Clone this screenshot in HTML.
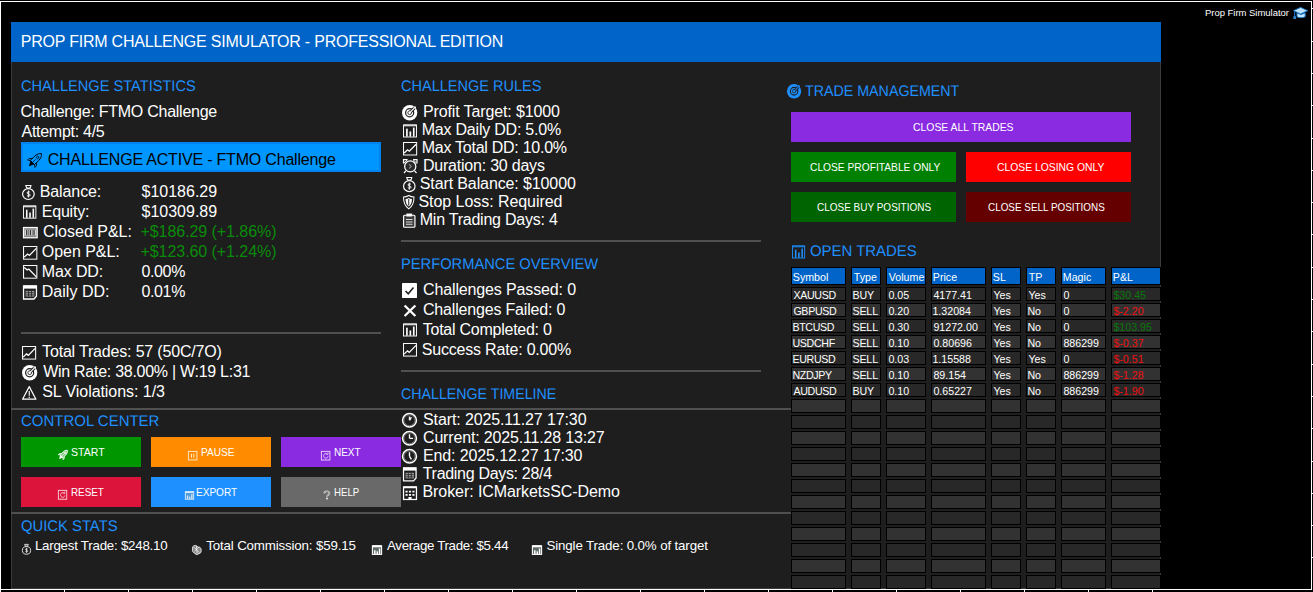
<!DOCTYPE html>
<html lang="en"><head><meta charset="utf-8"><title>Prop Firm Challenge Simulator</title>
<style>
html,body{margin:0;padding:0;background:#000}
body{width:1313px;height:592px;position:relative;overflow:hidden;font-family:'Liberation Sans', sans-serif}
#c{position:absolute;left:0;top:0;width:1313px;height:592px;overflow:hidden;background:#000}
#c div,#c span,#c svg{position:absolute;display:block}
#c span{white-space:pre}
#c svg{overflow:visible}
</style></head>
<body>
<div id="c">
<div style="left:0px;top:1px;width:1312px;height:1px;background:#fff;"></div>
<div style="left:0px;top:1px;width:1px;height:591px;background:#fff;"></div>
<div style="left:0px;top:589px;width:1312px;height:1px;background:#fff;"></div>
<div style="left:1311px;top:1px;width:1px;height:589px;background:#fff;"></div>
<div style="left:1311px;top:8px;width:2px;height:1px;background:#fff;"></div>
<div style="left:1311px;top:41px;width:2px;height:1px;background:#fff;"></div>
<div style="left:1311px;top:73px;width:2px;height:1px;background:#fff;"></div>
<div style="left:1311px;top:105px;width:2px;height:1px;background:#fff;"></div>
<div style="left:1311px;top:138px;width:2px;height:1px;background:#fff;"></div>
<div style="left:1311px;top:170px;width:2px;height:1px;background:#fff;"></div>
<div style="left:1311px;top:202px;width:2px;height:1px;background:#fff;"></div>
<div style="left:1311px;top:234px;width:2px;height:1px;background:#fff;"></div>
<div style="left:1311px;top:267px;width:2px;height:1px;background:#fff;"></div>
<div style="left:1311px;top:299px;width:2px;height:1px;background:#fff;"></div>
<div style="left:1311px;top:331px;width:2px;height:1px;background:#fff;"></div>
<div style="left:1311px;top:364px;width:2px;height:1px;background:#fff;"></div>
<div style="left:1311px;top:396px;width:2px;height:1px;background:#fff;"></div>
<div style="left:1311px;top:428px;width:2px;height:1px;background:#fff;"></div>
<div style="left:1311px;top:461px;width:2px;height:1px;background:#fff;"></div>
<div style="left:1311px;top:493px;width:2px;height:1px;background:#fff;"></div>
<div style="left:1311px;top:525px;width:2px;height:1px;background:#fff;"></div>
<div style="left:1311px;top:557px;width:2px;height:1px;background:#fff;"></div>
<div style="left:64px;top:589px;width:1px;height:3px;background:#fff;"></div>
<div style="left:128px;top:589px;width:1px;height:3px;background:#fff;"></div>
<div style="left:192px;top:589px;width:1px;height:3px;background:#fff;"></div>
<div style="left:256px;top:589px;width:1px;height:3px;background:#fff;"></div>
<div style="left:320px;top:589px;width:1px;height:3px;background:#fff;"></div>
<div style="left:384px;top:589px;width:1px;height:3px;background:#fff;"></div>
<div style="left:448px;top:589px;width:1px;height:3px;background:#fff;"></div>
<div style="left:512px;top:589px;width:1px;height:3px;background:#fff;"></div>
<div style="left:576px;top:589px;width:1px;height:3px;background:#fff;"></div>
<div style="left:640px;top:589px;width:1px;height:3px;background:#fff;"></div>
<div style="left:704px;top:589px;width:1px;height:3px;background:#fff;"></div>
<div style="left:768px;top:589px;width:1px;height:3px;background:#fff;"></div>
<div style="left:832px;top:589px;width:1px;height:3px;background:#fff;"></div>
<div style="left:896px;top:589px;width:1px;height:3px;background:#fff;"></div>
<div style="left:960px;top:589px;width:1px;height:3px;background:#fff;"></div>
<div style="left:1024px;top:589px;width:1px;height:3px;background:#fff;"></div>
<div style="left:1088px;top:589px;width:1px;height:3px;background:#fff;"></div>
<div style="left:1152px;top:589px;width:1px;height:3px;background:#fff;"></div>
<div style="left:11px;top:22px;width:1150px;height:567px;background:#1e1e1e;box-shadow:inset 0 0 0 1px #3c3c3c;"></div>
<div style="left:11px;top:22px;width:1150px;height:40px;background:#0064c8;"></div>
<div style="left:21px;top:332px;width:360px;height:2px;background:#505050;"></div>
<div style="left:401px;top:240px;width:360px;height:2px;background:#505050;"></div>
<div style="left:401px;top:370px;width:360px;height:2px;background:#505050;"></div>
<div style="left:11px;top:408px;width:780px;height:2px;background:#505050;"></div>
<div style="left:11px;top:512px;width:780px;height:2px;background:#505050;"></div>
<div style="left:21px;top:142px;width:360px;height:30px;background:#0096ff;box-shadow:inset 0 0 0 2px #0082f0;"></div>
<div style="left:21px;top:437px;width:120px;height:30px;background:#009600;"></div>
<div style="left:151px;top:437px;width:120px;height:30px;background:#ff8c00;"></div>
<div style="left:281px;top:437px;width:120px;height:30px;background:#8a2be2;"></div>
<div style="left:21px;top:477px;width:120px;height:30px;background:#dc143c;"></div>
<div style="left:151px;top:477px;width:120px;height:30px;background:#1e90ff;"></div>
<div style="left:281px;top:477px;width:120px;height:30px;background:#696969;"></div>
<div style="left:791px;top:112px;width:340px;height:30px;background:#8a2be2;"></div>
<div style="left:791px;top:152px;width:165px;height:30px;background:#008000;"></div>
<div style="left:966px;top:152px;width:165px;height:30px;background:#ff0000;"></div>
<div style="left:791px;top:192px;width:165px;height:30px;background:#006400;"></div>
<div style="left:966px;top:192px;width:165px;height:30px;background:#640000;"></div>
<div style="left:791px;top:267px;width:55px;height:18px;background:#0064c8;box-shadow:inset 0 0 0 1px #000;"></div>
<div style="left:851px;top:267px;width:30px;height:18px;background:#0064c8;box-shadow:inset 0 0 0 1px #000;"></div>
<div style="left:886px;top:267px;width:40px;height:18px;background:#0064c8;box-shadow:inset 0 0 0 1px #000;"></div>
<div style="left:931px;top:267px;width:55px;height:18px;background:#0064c8;box-shadow:inset 0 0 0 1px #000;"></div>
<div style="left:991px;top:267px;width:30px;height:18px;background:#0064c8;box-shadow:inset 0 0 0 1px #000;"></div>
<div style="left:1026px;top:267px;width:30px;height:18px;background:#0064c8;box-shadow:inset 0 0 0 1px #000;"></div>
<div style="left:1061px;top:267px;width:45px;height:18px;background:#0064c8;box-shadow:inset 0 0 0 1px #000;"></div>
<div style="left:1111px;top:267px;width:50px;height:18px;background:#0064c8;box-shadow:inset 0 0 0 1px #000;"></div>
<div style="left:791px;top:287px;width:55px;height:14px;background:#282828;box-shadow:inset 0 0 0 1px #000;"></div>
<div style="left:851px;top:287px;width:30px;height:14px;background:#282828;box-shadow:inset 0 0 0 1px #000;"></div>
<div style="left:886px;top:287px;width:40px;height:14px;background:#282828;box-shadow:inset 0 0 0 1px #000;"></div>
<div style="left:931px;top:287px;width:55px;height:14px;background:#282828;box-shadow:inset 0 0 0 1px #000;"></div>
<div style="left:991px;top:287px;width:30px;height:14px;background:#282828;box-shadow:inset 0 0 0 1px #000;"></div>
<div style="left:1026px;top:287px;width:30px;height:14px;background:#282828;box-shadow:inset 0 0 0 1px #000;"></div>
<div style="left:1061px;top:287px;width:45px;height:14px;background:#282828;box-shadow:inset 0 0 0 1px #000;"></div>
<div style="left:1111px;top:287px;width:50px;height:14px;background:#282828;box-shadow:inset 0 0 0 1px #000;"></div>
<div style="left:791px;top:303px;width:55px;height:14px;background:#323232;box-shadow:inset 0 0 0 1px #000;"></div>
<div style="left:851px;top:303px;width:30px;height:14px;background:#323232;box-shadow:inset 0 0 0 1px #000;"></div>
<div style="left:886px;top:303px;width:40px;height:14px;background:#323232;box-shadow:inset 0 0 0 1px #000;"></div>
<div style="left:931px;top:303px;width:55px;height:14px;background:#323232;box-shadow:inset 0 0 0 1px #000;"></div>
<div style="left:991px;top:303px;width:30px;height:14px;background:#323232;box-shadow:inset 0 0 0 1px #000;"></div>
<div style="left:1026px;top:303px;width:30px;height:14px;background:#323232;box-shadow:inset 0 0 0 1px #000;"></div>
<div style="left:1061px;top:303px;width:45px;height:14px;background:#323232;box-shadow:inset 0 0 0 1px #000;"></div>
<div style="left:1111px;top:303px;width:50px;height:14px;background:#323232;box-shadow:inset 0 0 0 1px #000;"></div>
<div style="left:791px;top:319px;width:55px;height:14px;background:#282828;box-shadow:inset 0 0 0 1px #000;"></div>
<div style="left:851px;top:319px;width:30px;height:14px;background:#282828;box-shadow:inset 0 0 0 1px #000;"></div>
<div style="left:886px;top:319px;width:40px;height:14px;background:#282828;box-shadow:inset 0 0 0 1px #000;"></div>
<div style="left:931px;top:319px;width:55px;height:14px;background:#282828;box-shadow:inset 0 0 0 1px #000;"></div>
<div style="left:991px;top:319px;width:30px;height:14px;background:#282828;box-shadow:inset 0 0 0 1px #000;"></div>
<div style="left:1026px;top:319px;width:30px;height:14px;background:#282828;box-shadow:inset 0 0 0 1px #000;"></div>
<div style="left:1061px;top:319px;width:45px;height:14px;background:#282828;box-shadow:inset 0 0 0 1px #000;"></div>
<div style="left:1111px;top:319px;width:50px;height:14px;background:#282828;box-shadow:inset 0 0 0 1px #000;"></div>
<div style="left:791px;top:335px;width:55px;height:14px;background:#323232;box-shadow:inset 0 0 0 1px #000;"></div>
<div style="left:851px;top:335px;width:30px;height:14px;background:#323232;box-shadow:inset 0 0 0 1px #000;"></div>
<div style="left:886px;top:335px;width:40px;height:14px;background:#323232;box-shadow:inset 0 0 0 1px #000;"></div>
<div style="left:931px;top:335px;width:55px;height:14px;background:#323232;box-shadow:inset 0 0 0 1px #000;"></div>
<div style="left:991px;top:335px;width:30px;height:14px;background:#323232;box-shadow:inset 0 0 0 1px #000;"></div>
<div style="left:1026px;top:335px;width:30px;height:14px;background:#323232;box-shadow:inset 0 0 0 1px #000;"></div>
<div style="left:1061px;top:335px;width:45px;height:14px;background:#323232;box-shadow:inset 0 0 0 1px #000;"></div>
<div style="left:1111px;top:335px;width:50px;height:14px;background:#323232;box-shadow:inset 0 0 0 1px #000;"></div>
<div style="left:791px;top:351px;width:55px;height:14px;background:#282828;box-shadow:inset 0 0 0 1px #000;"></div>
<div style="left:851px;top:351px;width:30px;height:14px;background:#282828;box-shadow:inset 0 0 0 1px #000;"></div>
<div style="left:886px;top:351px;width:40px;height:14px;background:#282828;box-shadow:inset 0 0 0 1px #000;"></div>
<div style="left:931px;top:351px;width:55px;height:14px;background:#282828;box-shadow:inset 0 0 0 1px #000;"></div>
<div style="left:991px;top:351px;width:30px;height:14px;background:#282828;box-shadow:inset 0 0 0 1px #000;"></div>
<div style="left:1026px;top:351px;width:30px;height:14px;background:#282828;box-shadow:inset 0 0 0 1px #000;"></div>
<div style="left:1061px;top:351px;width:45px;height:14px;background:#282828;box-shadow:inset 0 0 0 1px #000;"></div>
<div style="left:1111px;top:351px;width:50px;height:14px;background:#282828;box-shadow:inset 0 0 0 1px #000;"></div>
<div style="left:791px;top:367px;width:55px;height:14px;background:#323232;box-shadow:inset 0 0 0 1px #000;"></div>
<div style="left:851px;top:367px;width:30px;height:14px;background:#323232;box-shadow:inset 0 0 0 1px #000;"></div>
<div style="left:886px;top:367px;width:40px;height:14px;background:#323232;box-shadow:inset 0 0 0 1px #000;"></div>
<div style="left:931px;top:367px;width:55px;height:14px;background:#323232;box-shadow:inset 0 0 0 1px #000;"></div>
<div style="left:991px;top:367px;width:30px;height:14px;background:#323232;box-shadow:inset 0 0 0 1px #000;"></div>
<div style="left:1026px;top:367px;width:30px;height:14px;background:#323232;box-shadow:inset 0 0 0 1px #000;"></div>
<div style="left:1061px;top:367px;width:45px;height:14px;background:#323232;box-shadow:inset 0 0 0 1px #000;"></div>
<div style="left:1111px;top:367px;width:50px;height:14px;background:#323232;box-shadow:inset 0 0 0 1px #000;"></div>
<div style="left:791px;top:383px;width:55px;height:14px;background:#282828;box-shadow:inset 0 0 0 1px #000;"></div>
<div style="left:851px;top:383px;width:30px;height:14px;background:#282828;box-shadow:inset 0 0 0 1px #000;"></div>
<div style="left:886px;top:383px;width:40px;height:14px;background:#282828;box-shadow:inset 0 0 0 1px #000;"></div>
<div style="left:931px;top:383px;width:55px;height:14px;background:#282828;box-shadow:inset 0 0 0 1px #000;"></div>
<div style="left:991px;top:383px;width:30px;height:14px;background:#282828;box-shadow:inset 0 0 0 1px #000;"></div>
<div style="left:1026px;top:383px;width:30px;height:14px;background:#282828;box-shadow:inset 0 0 0 1px #000;"></div>
<div style="left:1061px;top:383px;width:45px;height:14px;background:#282828;box-shadow:inset 0 0 0 1px #000;"></div>
<div style="left:1111px;top:383px;width:50px;height:14px;background:#282828;box-shadow:inset 0 0 0 1px #000;"></div>
<div style="left:791px;top:399px;width:55px;height:14px;background:#323232;box-shadow:inset 0 0 0 1px #000;"></div>
<div style="left:851px;top:399px;width:30px;height:14px;background:#323232;box-shadow:inset 0 0 0 1px #000;"></div>
<div style="left:886px;top:399px;width:40px;height:14px;background:#323232;box-shadow:inset 0 0 0 1px #000;"></div>
<div style="left:931px;top:399px;width:55px;height:14px;background:#323232;box-shadow:inset 0 0 0 1px #000;"></div>
<div style="left:991px;top:399px;width:30px;height:14px;background:#323232;box-shadow:inset 0 0 0 1px #000;"></div>
<div style="left:1026px;top:399px;width:30px;height:14px;background:#323232;box-shadow:inset 0 0 0 1px #000;"></div>
<div style="left:1061px;top:399px;width:45px;height:14px;background:#323232;box-shadow:inset 0 0 0 1px #000;"></div>
<div style="left:1111px;top:399px;width:50px;height:14px;background:#323232;box-shadow:inset 0 0 0 1px #000;"></div>
<div style="left:791px;top:415px;width:55px;height:14px;background:#282828;box-shadow:inset 0 0 0 1px #000;"></div>
<div style="left:851px;top:415px;width:30px;height:14px;background:#282828;box-shadow:inset 0 0 0 1px #000;"></div>
<div style="left:886px;top:415px;width:40px;height:14px;background:#282828;box-shadow:inset 0 0 0 1px #000;"></div>
<div style="left:931px;top:415px;width:55px;height:14px;background:#282828;box-shadow:inset 0 0 0 1px #000;"></div>
<div style="left:991px;top:415px;width:30px;height:14px;background:#282828;box-shadow:inset 0 0 0 1px #000;"></div>
<div style="left:1026px;top:415px;width:30px;height:14px;background:#282828;box-shadow:inset 0 0 0 1px #000;"></div>
<div style="left:1061px;top:415px;width:45px;height:14px;background:#282828;box-shadow:inset 0 0 0 1px #000;"></div>
<div style="left:1111px;top:415px;width:50px;height:14px;background:#282828;box-shadow:inset 0 0 0 1px #000;"></div>
<div style="left:791px;top:431px;width:55px;height:14px;background:#323232;box-shadow:inset 0 0 0 1px #000;"></div>
<div style="left:851px;top:431px;width:30px;height:14px;background:#323232;box-shadow:inset 0 0 0 1px #000;"></div>
<div style="left:886px;top:431px;width:40px;height:14px;background:#323232;box-shadow:inset 0 0 0 1px #000;"></div>
<div style="left:931px;top:431px;width:55px;height:14px;background:#323232;box-shadow:inset 0 0 0 1px #000;"></div>
<div style="left:991px;top:431px;width:30px;height:14px;background:#323232;box-shadow:inset 0 0 0 1px #000;"></div>
<div style="left:1026px;top:431px;width:30px;height:14px;background:#323232;box-shadow:inset 0 0 0 1px #000;"></div>
<div style="left:1061px;top:431px;width:45px;height:14px;background:#323232;box-shadow:inset 0 0 0 1px #000;"></div>
<div style="left:1111px;top:431px;width:50px;height:14px;background:#323232;box-shadow:inset 0 0 0 1px #000;"></div>
<div style="left:791px;top:447px;width:55px;height:14px;background:#282828;box-shadow:inset 0 0 0 1px #000;"></div>
<div style="left:851px;top:447px;width:30px;height:14px;background:#282828;box-shadow:inset 0 0 0 1px #000;"></div>
<div style="left:886px;top:447px;width:40px;height:14px;background:#282828;box-shadow:inset 0 0 0 1px #000;"></div>
<div style="left:931px;top:447px;width:55px;height:14px;background:#282828;box-shadow:inset 0 0 0 1px #000;"></div>
<div style="left:991px;top:447px;width:30px;height:14px;background:#282828;box-shadow:inset 0 0 0 1px #000;"></div>
<div style="left:1026px;top:447px;width:30px;height:14px;background:#282828;box-shadow:inset 0 0 0 1px #000;"></div>
<div style="left:1061px;top:447px;width:45px;height:14px;background:#282828;box-shadow:inset 0 0 0 1px #000;"></div>
<div style="left:1111px;top:447px;width:50px;height:14px;background:#282828;box-shadow:inset 0 0 0 1px #000;"></div>
<div style="left:791px;top:463px;width:55px;height:14px;background:#323232;box-shadow:inset 0 0 0 1px #000;"></div>
<div style="left:851px;top:463px;width:30px;height:14px;background:#323232;box-shadow:inset 0 0 0 1px #000;"></div>
<div style="left:886px;top:463px;width:40px;height:14px;background:#323232;box-shadow:inset 0 0 0 1px #000;"></div>
<div style="left:931px;top:463px;width:55px;height:14px;background:#323232;box-shadow:inset 0 0 0 1px #000;"></div>
<div style="left:991px;top:463px;width:30px;height:14px;background:#323232;box-shadow:inset 0 0 0 1px #000;"></div>
<div style="left:1026px;top:463px;width:30px;height:14px;background:#323232;box-shadow:inset 0 0 0 1px #000;"></div>
<div style="left:1061px;top:463px;width:45px;height:14px;background:#323232;box-shadow:inset 0 0 0 1px #000;"></div>
<div style="left:1111px;top:463px;width:50px;height:14px;background:#323232;box-shadow:inset 0 0 0 1px #000;"></div>
<div style="left:791px;top:479px;width:55px;height:14px;background:#282828;box-shadow:inset 0 0 0 1px #000;"></div>
<div style="left:851px;top:479px;width:30px;height:14px;background:#282828;box-shadow:inset 0 0 0 1px #000;"></div>
<div style="left:886px;top:479px;width:40px;height:14px;background:#282828;box-shadow:inset 0 0 0 1px #000;"></div>
<div style="left:931px;top:479px;width:55px;height:14px;background:#282828;box-shadow:inset 0 0 0 1px #000;"></div>
<div style="left:991px;top:479px;width:30px;height:14px;background:#282828;box-shadow:inset 0 0 0 1px #000;"></div>
<div style="left:1026px;top:479px;width:30px;height:14px;background:#282828;box-shadow:inset 0 0 0 1px #000;"></div>
<div style="left:1061px;top:479px;width:45px;height:14px;background:#282828;box-shadow:inset 0 0 0 1px #000;"></div>
<div style="left:1111px;top:479px;width:50px;height:14px;background:#282828;box-shadow:inset 0 0 0 1px #000;"></div>
<div style="left:791px;top:495px;width:55px;height:14px;background:#323232;box-shadow:inset 0 0 0 1px #000;"></div>
<div style="left:851px;top:495px;width:30px;height:14px;background:#323232;box-shadow:inset 0 0 0 1px #000;"></div>
<div style="left:886px;top:495px;width:40px;height:14px;background:#323232;box-shadow:inset 0 0 0 1px #000;"></div>
<div style="left:931px;top:495px;width:55px;height:14px;background:#323232;box-shadow:inset 0 0 0 1px #000;"></div>
<div style="left:991px;top:495px;width:30px;height:14px;background:#323232;box-shadow:inset 0 0 0 1px #000;"></div>
<div style="left:1026px;top:495px;width:30px;height:14px;background:#323232;box-shadow:inset 0 0 0 1px #000;"></div>
<div style="left:1061px;top:495px;width:45px;height:14px;background:#323232;box-shadow:inset 0 0 0 1px #000;"></div>
<div style="left:1111px;top:495px;width:50px;height:14px;background:#323232;box-shadow:inset 0 0 0 1px #000;"></div>
<div style="left:791px;top:511px;width:55px;height:14px;background:#282828;box-shadow:inset 0 0 0 1px #000;"></div>
<div style="left:851px;top:511px;width:30px;height:14px;background:#282828;box-shadow:inset 0 0 0 1px #000;"></div>
<div style="left:886px;top:511px;width:40px;height:14px;background:#282828;box-shadow:inset 0 0 0 1px #000;"></div>
<div style="left:931px;top:511px;width:55px;height:14px;background:#282828;box-shadow:inset 0 0 0 1px #000;"></div>
<div style="left:991px;top:511px;width:30px;height:14px;background:#282828;box-shadow:inset 0 0 0 1px #000;"></div>
<div style="left:1026px;top:511px;width:30px;height:14px;background:#282828;box-shadow:inset 0 0 0 1px #000;"></div>
<div style="left:1061px;top:511px;width:45px;height:14px;background:#282828;box-shadow:inset 0 0 0 1px #000;"></div>
<div style="left:1111px;top:511px;width:50px;height:14px;background:#282828;box-shadow:inset 0 0 0 1px #000;"></div>
<div style="left:791px;top:527px;width:55px;height:14px;background:#323232;box-shadow:inset 0 0 0 1px #000;"></div>
<div style="left:851px;top:527px;width:30px;height:14px;background:#323232;box-shadow:inset 0 0 0 1px #000;"></div>
<div style="left:886px;top:527px;width:40px;height:14px;background:#323232;box-shadow:inset 0 0 0 1px #000;"></div>
<div style="left:931px;top:527px;width:55px;height:14px;background:#323232;box-shadow:inset 0 0 0 1px #000;"></div>
<div style="left:991px;top:527px;width:30px;height:14px;background:#323232;box-shadow:inset 0 0 0 1px #000;"></div>
<div style="left:1026px;top:527px;width:30px;height:14px;background:#323232;box-shadow:inset 0 0 0 1px #000;"></div>
<div style="left:1061px;top:527px;width:45px;height:14px;background:#323232;box-shadow:inset 0 0 0 1px #000;"></div>
<div style="left:1111px;top:527px;width:50px;height:14px;background:#323232;box-shadow:inset 0 0 0 1px #000;"></div>
<div style="left:791px;top:543px;width:55px;height:14px;background:#282828;box-shadow:inset 0 0 0 1px #000;"></div>
<div style="left:851px;top:543px;width:30px;height:14px;background:#282828;box-shadow:inset 0 0 0 1px #000;"></div>
<div style="left:886px;top:543px;width:40px;height:14px;background:#282828;box-shadow:inset 0 0 0 1px #000;"></div>
<div style="left:931px;top:543px;width:55px;height:14px;background:#282828;box-shadow:inset 0 0 0 1px #000;"></div>
<div style="left:991px;top:543px;width:30px;height:14px;background:#282828;box-shadow:inset 0 0 0 1px #000;"></div>
<div style="left:1026px;top:543px;width:30px;height:14px;background:#282828;box-shadow:inset 0 0 0 1px #000;"></div>
<div style="left:1061px;top:543px;width:45px;height:14px;background:#282828;box-shadow:inset 0 0 0 1px #000;"></div>
<div style="left:1111px;top:543px;width:50px;height:14px;background:#282828;box-shadow:inset 0 0 0 1px #000;"></div>
<div style="left:791px;top:559px;width:55px;height:14px;background:#323232;box-shadow:inset 0 0 0 1px #000;"></div>
<div style="left:851px;top:559px;width:30px;height:14px;background:#323232;box-shadow:inset 0 0 0 1px #000;"></div>
<div style="left:886px;top:559px;width:40px;height:14px;background:#323232;box-shadow:inset 0 0 0 1px #000;"></div>
<div style="left:931px;top:559px;width:55px;height:14px;background:#323232;box-shadow:inset 0 0 0 1px #000;"></div>
<div style="left:991px;top:559px;width:30px;height:14px;background:#323232;box-shadow:inset 0 0 0 1px #000;"></div>
<div style="left:1026px;top:559px;width:30px;height:14px;background:#323232;box-shadow:inset 0 0 0 1px #000;"></div>
<div style="left:1061px;top:559px;width:45px;height:14px;background:#323232;box-shadow:inset 0 0 0 1px #000;"></div>
<div style="left:1111px;top:559px;width:50px;height:14px;background:#323232;box-shadow:inset 0 0 0 1px #000;"></div>
<div style="left:791px;top:575px;width:55px;height:14px;background:#282828;box-shadow:inset 0 0 0 1px #000;"></div>
<div style="left:851px;top:575px;width:30px;height:14px;background:#282828;box-shadow:inset 0 0 0 1px #000;"></div>
<div style="left:886px;top:575px;width:40px;height:14px;background:#282828;box-shadow:inset 0 0 0 1px #000;"></div>
<div style="left:931px;top:575px;width:55px;height:14px;background:#282828;box-shadow:inset 0 0 0 1px #000;"></div>
<div style="left:991px;top:575px;width:30px;height:14px;background:#282828;box-shadow:inset 0 0 0 1px #000;"></div>
<div style="left:1026px;top:575px;width:30px;height:14px;background:#282828;box-shadow:inset 0 0 0 1px #000;"></div>
<div style="left:1061px;top:575px;width:45px;height:14px;background:#282828;box-shadow:inset 0 0 0 1px #000;"></div>
<div style="left:1111px;top:575px;width:50px;height:14px;background:#282828;box-shadow:inset 0 0 0 1px #000;"></div>
<svg style="left:27.1px;top:152.8px" width="15" height="15" viewBox="-9.2 -7.4 16.6 16.6" preserveAspectRatio="none"><g transform="rotate(45)"><path d="M0-9.600C2.400-7.600 3.300-4.800 3.300-2.200V4.600H-3.300V-2.200C-3.300-4.800-2.400-7.600 0-9.600z" fill="none" stroke="#000" stroke-width="1.0" stroke-linejoin="round"/><circle cx="0" cy="-3.600" r="1.350" fill="none" stroke="#000" stroke-width="0.85"/><path d="M-3.300 1.200L-5.800 4.200V6.400L-3.300 4.600M3.300 1.200L5.800 4.200V6.400L3.300 4.600" fill="none" stroke="#000" stroke-width="0.90" stroke-linejoin="round"/><path d="M0 -0.600V4.600" stroke="#000" stroke-width="0.70"/><path d="M-2.300 4.600L0 9.400 2.300 4.600z" fill="#000" stroke="#000" stroke-width="0.80" stroke-linejoin="round"/></g></svg>
<svg style="left:22.2px;top:185px" width="12.8" height="15" viewBox="1.75 0.65 12.50 15.00" preserveAspectRatio="none"><path d="M5.400 1.200h5.200l-1 2.400H6.400z" fill="none" stroke="#fff" stroke-width="1.100" stroke-linejoin="round"/><ellipse cx="8" cy="9.700" rx="5.700" ry="5.400" fill="none" stroke="#fff" stroke-width="1.150"/><path d="M9.700 8c-.4-.8-3-.9-3 .5 0 1.500 3.100.7 3.100 2.200 0 1.400-2.700 1.300-3.300.4M8 6.200v7" fill="none" stroke="#fff" stroke-width=".95"/></svg>
<svg style="left:22.8px;top:205.4px" width="13.4" height="13.7" viewBox="0.85 0.75 14.30 14.60" preserveAspectRatio="none"><rect x="1.400" y="1.800" width="13.200" height="13" fill="none" stroke="#fff" stroke-width="1"/><rect x="1.400" y="1.300" width="13.200" height="2" fill="#fff" fill-opacity=".7"/><rect x="4" y="5.800" width="1.700" height="8.600" fill="#fff"/><rect x="7.500" y="8.800" width="1.700" height="5.600" fill="#fff"/><rect x="11" y="4.600" width="1.700" height="9.800" fill="#fff"/></svg>
<svg style="left:22.8px;top:226.6px" width="14.7" height="11.3" viewBox="0.35 2.05 15.30 11.90" preserveAspectRatio="none"><rect x="0.900" y="2.600" width="14.200" height="10.800" fill="#8a8a8a" stroke="#fff" stroke-width="1.300"/><rect x="2.200" y="5" width="11.600" height="6" fill="#d8d8d8"/><path d="M4.200 5.200v5.600M8 5.200v5.600M11.800 5.200v5.600" stroke="#333" stroke-width="1.300"/><path d="M6 5v6M10 5v6" stroke="#555" stroke-width=".8"/></svg>
<svg style="left:22.5px;top:245.5px" width="14.4" height="13.7" viewBox="0.75 0.75 14.50 14.50" preserveAspectRatio="none"><rect x="1.300" y="1.300" width="13.400" height="13.400" fill="none" stroke="#fff" stroke-width="1.050"/><path d="M2 12.600l3.400-3.400 1.800 1.500 7-7.500" fill="none" stroke="#fff" stroke-width="1.300"/></svg>
<svg style="left:22.5px;top:265.4px" width="14.4" height="13.7" viewBox="0.75 0.75 14.50 14.50" preserveAspectRatio="none"><rect x="1.300" y="1.300" width="13.400" height="13.400" fill="none" stroke="#fff" stroke-width="1.050"/><path d="M2 3.400l3 2.600 1.600-1 7.600 8.400" fill="none" stroke="#fff" stroke-width="1.300"/></svg>
<svg style="left:22.5px;top:285.4px" width="14" height="14.6" viewBox="0.85 0.65 14.30 14.30" preserveAspectRatio="none"><path d="M1.400 1.600h13.200v10l-2.600 2.800H1.400z" fill="none" stroke="#fff" stroke-width="1.300"/><rect x="1.400" y="1.200" width="13.200" height="3" fill="#fff"/><rect x="3.600" y="6.400" width="8.800" height="5.600" fill="#9a9a9a"/><path d="M4 8.200h8M4 10.400h8M6.500 6.400v5.600M9.500 6.400v5.600" stroke="#222" stroke-width=".8"/></svg>
<svg style="left:22.2px;top:345.5px" width="14.2" height="13.6" viewBox="0.75 0.75 14.50 14.50" preserveAspectRatio="none"><rect x="1.300" y="1.300" width="13.400" height="13.400" fill="none" stroke="#fff" stroke-width="1.050"/><path d="M2 12.600l3.400-3.400 1.800 1.500 7-7.500" fill="none" stroke="#fff" stroke-width="1.300"/></svg>
<svg style="left:22.2px;top:364.6px" width="15.3" height="15.5" viewBox="0.80 0.80 14.40 14.40" preserveAspectRatio="none"><circle cx="8" cy="8" r="7.200" fill="#fff"/><circle cx="8" cy="8" r="3.800" fill="none" stroke="#1e1e1e" stroke-width="1.150"/><circle cx="8" cy="8" r="1.700" fill="none" stroke="#1e1e1e" stroke-width=".8"/><path d="M8.800 7.200l4.200-4.200" stroke="#1e1e1e" stroke-width="2.800"/><path d="M8 8l5-5" stroke="#fff" stroke-width="1.050"/><path d="M11.400 2.700l2.100-.2-.2 2.100" fill="none" stroke="#fff" stroke-width=".9"/></svg>
<svg style="left:22.4px;top:386px" width="14.5" height="13.8" viewBox="0.85 1.85 14.30 13.10" preserveAspectRatio="none"><path d="M8 2.400L1.400 14.400h13.200z" fill="none" stroke="#fff" stroke-width="1.200" stroke-linejoin="round"/><path d="M8 6.500v4.700" stroke="#fff" stroke-width="1.100"/><rect x="7.400" y="12" width="1.200" height="1.200" fill="#fff"/></svg>
<svg style="left:57.8px;top:450px" width="9.8" height="10" viewBox="-9.2 -7.4 16.6 16.6" preserveAspectRatio="none"><g transform="rotate(45)"><path d="M0-9.600C2.400-7.600 3.300-4.800 3.300-2.200V4.600H-3.300V-2.200C-3.300-4.800-2.400-7.600 0-9.600z" fill="#7fc97f" stroke="#fff" stroke-width="1.5" stroke-linejoin="round"/><circle cx="0" cy="-3.600" r="1.350" fill="none" stroke="#fff" stroke-width="1.27"/><path d="M-3.300 1.200L-5.800 4.200V6.400L-3.300 4.600M3.300 1.200L5.800 4.200V6.400L3.300 4.600" fill="#7fc97f" stroke="#fff" stroke-width="1.35" stroke-linejoin="round"/><path d="M0 -0.600V4.600" stroke="#fff" stroke-width="1.05"/><path d="M-2.300 4.600L0 9.400 2.300 4.600z" fill="#fff" stroke="#fff" stroke-width="1.20" stroke-linejoin="round"/></g></svg>
<svg style="left:187.7px;top:450.6px;opacity:0.8" width="9.3" height="9.3" viewBox="1.05 1.05 13.90 13.90" preserveAspectRatio="none"><rect x="1.600" y="1.600" width="12.800" height="12.800" fill="none" stroke="#fff" stroke-width="1.400"/><path d="M6.200 5v6M9.800 5v6" stroke="#fff" stroke-width="1.500"/></svg>
<svg style="left:320.8px;top:450.6px;opacity:0.8" width="9.3" height="9.4" viewBox="1.05 1.05 13.90 13.90" preserveAspectRatio="none"><rect x="1.600" y="1.600" width="12.800" height="12.800" fill="none" stroke="#fff" stroke-width="1.400"/><path d="M11 6.200A3.400 3.400 0 1 0 11.600 9" fill="none" stroke="#fff" stroke-width="1.300"/><path d="M9 5.800h2.600V3.400" fill="none" stroke="#fff" stroke-width="1.200"/></svg>
<svg style="left:58px;top:490.3px;opacity:0.8" width="9.1" height="9.6" viewBox="1.05 1.05 13.90 13.90" preserveAspectRatio="none"><rect x="1.600" y="1.600" width="12.800" height="12.800" fill="none" stroke="#fff" stroke-width="1.400"/><path d="M11 6.200A3.400 3.400 0 1 0 11.600 9" fill="none" stroke="#fff" stroke-width="1.300"/><path d="M9 5.800h2.600V3.400" fill="none" stroke="#fff" stroke-width="1.200"/></svg>
<svg style="left:185.1px;top:490.8px;opacity:0.8" width="9" height="8.6" viewBox="1.05 0.85 13.90 14.30" preserveAspectRatio="none"><rect x="1.600" y="2" width="12.800" height="12.600" fill="#9aa" fill-opacity=".55" stroke="#fff" stroke-width="1.500"/><rect x="1.600" y="1.400" width="12.800" height="2.800" fill="#fff"/><rect x="4" y="8.500" width="2" height="5.500" fill="#fff"/><rect x="7.400" y="10" width="2" height="4" fill="#fff"/><rect x="10.600" y="6" width="2" height="8" fill="#fff"/></svg>
<svg style="left:324px;top:491px;opacity:0.8" width="5.8" height="8.8" viewBox="3.65 1.05 8.90 15.20" preserveAspectRatio="none"><path d="M4.200 5.400c0-5 7.800-5 7.800-.4 0 2.800-3.600 2.800-3.600 6" fill="none" stroke="#fff" stroke-width="2.600"/><path d="M4.200 5.400c0-5 7.800-5 7.800-.4 0 2.800-3.600 2.800-3.600 6" fill="none" stroke="#696969" stroke-width=".9"/><circle cx="8.300" cy="14" r="1.700" fill="#fff"/></svg>
<svg style="left:21.5px;top:544px" width="9" height="10.6" viewBox="1.75 0.65 12.50 15.00" preserveAspectRatio="none"><path d="M5.400 1.200h5.200l-1 2.400H6.400z" fill="none" stroke="#fff" stroke-width="1.100" stroke-linejoin="round"/><ellipse cx="8" cy="9.700" rx="5.700" ry="5.400" fill="none" stroke="#fff" stroke-width="1.150"/><path d="M9.700 8c-.4-.8-3-.9-3 .5 0 1.500 3.100.7 3.100 2.200 0 1.400-2.700 1.300-3.300.4M8 6.200v7" fill="none" stroke="#fff" stroke-width=".95"/></svg>
<svg style="left:192px;top:544.5px" width="9.6" height="10" viewBox="1.13 2.26 14.02 12.63" preserveAspectRatio="none"><path d="M2 4.600c3-3 6.400-1.800 8 .4 2.400-.6 4.600 1 4.400 3.600.8 2.400-1 4.800-3.400 4.600-2 1.800-5 1.400-6-.8-2.600-.4-4-3-3-5z" fill="#8a8a8a" stroke="#fff" stroke-width="1.100"/><path d="M4 5l8 7M5 10l6-5M7.600 3.600l1 9.800" stroke="#fff" stroke-width=".9"/></svg>
<svg style="left:372px;top:544.6px" width="10" height="9.8" viewBox="1.05 0.85 13.90 14.30" preserveAspectRatio="none"><rect x="1.600" y="2" width="12.800" height="12.600" fill="#9aa" fill-opacity=".55" stroke="#fff" stroke-width="1.500"/><rect x="1.600" y="1.400" width="12.800" height="2.800" fill="#fff"/><rect x="4" y="8.500" width="2" height="5.500" fill="#fff"/><rect x="7.400" y="10" width="2" height="4" fill="#fff"/><rect x="10.600" y="6" width="2" height="8" fill="#fff"/></svg>
<svg style="left:532.2px;top:544.6px" width="10" height="9.8" viewBox="1.05 0.85 13.90 14.30" preserveAspectRatio="none"><rect x="1.600" y="2" width="12.800" height="12.600" fill="#9aa" fill-opacity=".55" stroke="#fff" stroke-width="1.500"/><rect x="1.600" y="1.400" width="12.800" height="2.800" fill="#fff"/><rect x="4" y="8.500" width="2" height="5.500" fill="#fff"/><rect x="7.400" y="10" width="2" height="4" fill="#fff"/><rect x="10.600" y="6" width="2" height="8" fill="#fff"/></svg>
<svg style="left:402.3px;top:104.8px" width="15.3" height="15.5" viewBox="0.80 0.80 14.40 14.40" preserveAspectRatio="none"><circle cx="8" cy="8" r="7.200" fill="#fff"/><circle cx="8" cy="8" r="3.800" fill="none" stroke="#1e1e1e" stroke-width="1.150"/><circle cx="8" cy="8" r="1.700" fill="none" stroke="#1e1e1e" stroke-width=".8"/><path d="M8.800 7.200l4.200-4.200" stroke="#1e1e1e" stroke-width="2.800"/><path d="M8 8l5-5" stroke="#fff" stroke-width="1.050"/><path d="M11.400 2.700l2.100-.2-.2 2.100" fill="none" stroke="#fff" stroke-width=".9"/></svg>
<svg style="left:402.6px;top:123.6px" width="14" height="13.5" viewBox="0.85 0.75 14.30 14.60" preserveAspectRatio="none"><rect x="1.400" y="1.800" width="13.200" height="13" fill="none" stroke="#fff" stroke-width="1"/><rect x="1.400" y="1.300" width="13.200" height="2" fill="#fff" fill-opacity=".7"/><rect x="4" y="5.800" width="1.700" height="8.600" fill="#fff"/><rect x="7.500" y="8.800" width="1.700" height="5.600" fill="#fff"/><rect x="11" y="4.600" width="1.700" height="9.800" fill="#fff"/></svg>
<svg style="left:402.6px;top:141.6px" width="14.2" height="13.5" viewBox="0.75 0.75 14.50 14.50" preserveAspectRatio="none"><rect x="1.300" y="1.300" width="13.400" height="13.400" fill="none" stroke="#fff" stroke-width="1.050"/><path d="M2 12.600l3.400-3.400 1.800 1.500 7-7.500" fill="none" stroke="#fff" stroke-width="1.300"/></svg>
<svg style="left:402.5px;top:159.4px" width="14.5" height="14.5" viewBox="0.35 0.75 15.30 15.40" preserveAspectRatio="none"><circle cx="8" cy="8.600" r="5.900" fill="#2c2c2c" stroke="#fff" stroke-width="1.300"/><path d="M.9 5.400V1.300h4.100M15.100 5.400V1.300h-4.100" fill="none" stroke="#fff" stroke-width="1.300"/><path d="M1.200 5.200L5 1.600M14.800 5.200L11 1.600" fill="none" stroke="#fff" stroke-width="1"/><path d="M3.400 13.400l-2 2.200M12.600 13.400l2 2.200" stroke="#fff" stroke-width="1.300"/><path d="M6.600 6.400l2.600 2.200-2.600 2.200" fill="none" stroke="#bbb" stroke-width="1"/></svg>
<svg style="left:402.5px;top:177px" width="12.6" height="15.2" viewBox="1.75 0.65 12.50 15.00" preserveAspectRatio="none"><path d="M5.400 1.200h5.200l-1 2.400H6.400z" fill="none" stroke="#fff" stroke-width="1.100" stroke-linejoin="round"/><ellipse cx="8" cy="9.700" rx="5.700" ry="5.400" fill="none" stroke="#fff" stroke-width="1.150"/><path d="M9.700 8c-.4-.8-3-.9-3 .5 0 1.500 3.100.7 3.100 2.200 0 1.400-2.700 1.300-3.300.4M8 6.200v7" fill="none" stroke="#fff" stroke-width=".95"/></svg>
<svg style="left:402.5px;top:195px" width="11.5" height="14.4" viewBox="1.65 0.45 12.70 15.30" preserveAspectRatio="none"><path d="M8 1c2 1.200 3.800 1.600 5.800 1.600 0 6.200-1.600 10-5.800 12.600C3.800 12.600 2.200 8.800 2.200 2.600 4.200 2.600 6 2.200 8 1z" fill="none" stroke="#fff" stroke-width="1.100"/><path d="M8 3.600c1.200.7 2.300.9 3.500 1 0 3.900-1 6.400-3.500 8.200-2.500-1.800-3.500-4.300-3.500-8.200 1.200-.1 2.300-.3 3.500-1z" fill="#fff"/><path d="M8 4.600v7" stroke="#222" stroke-width="1.100"/></svg>
<svg style="left:402.5px;top:213px" width="12.5" height="14.8" viewBox="1.85 0.45 12.30 15.10" preserveAspectRatio="none"><rect x="2.400" y="2.800" width="11.200" height="12.200" rx="1" fill="#3c3c3c" stroke="#fff" stroke-width="1.150"/><rect x="5.200" y="1" width="5.600" height="3" fill="#fff"/><path d="M4.800 7.200h6.400M4.800 9.600h6.400M4.800 12h6.400" stroke="#ddd" stroke-width="1"/></svg>
<svg style="left:402.4px;top:283px" width="15" height="15" viewBox="1.00 1.40 14.40 14.20" preserveAspectRatio="none"><rect x="1" y="1.400" width="14.400" height="14.200" rx="0.800" fill="#fff"/><path d="M4.400 9l2.600 2.600 5-6" fill="none" stroke="#1e1e1e" stroke-width="1.500"/></svg>
<svg style="left:403.9px;top:304.5px" width="12" height="11.5" viewBox="2.45 3.05 10.70 10.90" preserveAspectRatio="none"><path d="M3 3.600l9.600 9.800M12.600 3.600L3 13.400" stroke="#fff" stroke-width="2"/></svg>
<svg style="left:402.9px;top:323px" width="14" height="13.5" viewBox="0.85 0.75 14.30 14.60" preserveAspectRatio="none"><rect x="1.400" y="1.800" width="13.200" height="13" fill="none" stroke="#fff" stroke-width="1"/><rect x="1.400" y="1.300" width="13.200" height="2" fill="#fff" fill-opacity=".7"/><rect x="4" y="5.800" width="1.700" height="8.600" fill="#fff"/><rect x="7.500" y="8.800" width="1.700" height="5.600" fill="#fff"/><rect x="11" y="4.600" width="1.700" height="9.800" fill="#fff"/></svg>
<svg style="left:402.9px;top:343.2px" width="14" height="13.6" viewBox="0.75 0.75 14.50 14.50" preserveAspectRatio="none"><rect x="1.300" y="1.300" width="13.400" height="13.400" fill="none" stroke="#fff" stroke-width="1.050"/><path d="M2 12.600l3.400-3.400 1.800 1.500 7-7.500" fill="none" stroke="#fff" stroke-width="1.300"/></svg>
<svg style="left:402.4px;top:413px" width="15" height="14.6" viewBox="0.85 1.25 14.30 14.30" preserveAspectRatio="none"><circle cx="8" cy="8.400" r="6.600" fill="none" stroke="#fff" stroke-width="1.500"/><circle cx="8" cy="8.400" r="5.300" fill="none" stroke="#9a9a9a" stroke-width=".7"/><path d="M8 8.400l0 -3.6M8 8.400l1.8 -3" stroke="#fff" stroke-width="1.300" fill="none"/></svg>
<svg style="left:402.4px;top:431px" width="15" height="14.6" viewBox="0.85 1.25 14.30 14.30" preserveAspectRatio="none"><circle cx="8" cy="8.400" r="6.600" fill="none" stroke="#fff" stroke-width="1.500"/><circle cx="8" cy="8.400" r="5.300" fill="none" stroke="#9a9a9a" stroke-width=".7"/><path d="M8 8.400l0 -4M8 8.400l3.4 0" stroke="#fff" stroke-width="1.300" fill="none"/></svg>
<svg style="left:402.4px;top:449px" width="15" height="14.6" viewBox="0.85 1.25 14.30 14.30" preserveAspectRatio="none"><circle cx="8" cy="8.400" r="6.600" fill="none" stroke="#fff" stroke-width="1.500"/><circle cx="8" cy="8.400" r="5.300" fill="none" stroke="#9a9a9a" stroke-width=".7"/><path d="M8 8.400l0 -4M8 8.400l1.8 3" stroke="#fff" stroke-width="1.300" fill="none"/></svg>
<svg style="left:402.9px;top:467.2px" width="13.6" height="14.4" viewBox="0.85 0.65 14.30 14.30" preserveAspectRatio="none"><path d="M1.400 1.600h13.200v10l-2.600 2.800H1.400z" fill="none" stroke="#fff" stroke-width="1.300"/><rect x="1.400" y="1.200" width="13.200" height="3" fill="#fff"/><rect x="3.600" y="6.400" width="8.800" height="5.600" fill="#9a9a9a"/><path d="M4 8.200h8M4 10.400h8M6.500 6.400v5.600M9.500 6.400v5.600" stroke="#222" stroke-width=".8"/></svg>
<svg style="left:402.9px;top:485.5px" width="14" height="14" viewBox="0.85 0.65 14.30 14.70" preserveAspectRatio="none"><rect x="1.400" y="1.600" width="13.200" height="13.200" fill="none" stroke="#fff" stroke-width="1.300"/><rect x="1.400" y="1.200" width="13.200" height="1.800" fill="#fff"/><path d="M3.400 5.600h2.200v2H3.400zM6.900 5.600h2.200v2H6.900zM10.400 5.600h2.200v2h-2.200zM3.400 9h2.200v2H3.400zM6.900 9h2.200v2H6.900zM10.400 9h2.200v2h-2.200zM6.400 12.200h3.200v2.600H6.400z" fill="#fff"/></svg>
<svg style="left:787.1px;top:84px" width="14.2" height="14.5" viewBox="0.80 0.80 14.40 14.40" preserveAspectRatio="none"><circle cx="8" cy="8" r="7.200" fill="#1e90ff"/><circle cx="8" cy="8" r="3.800" fill="none" stroke="#1e1e1e" stroke-width="1.150"/><circle cx="8" cy="8" r="1.700" fill="none" stroke="#1e1e1e" stroke-width=".8"/><path d="M8.800 7.200l4.200-4.200" stroke="#1e1e1e" stroke-width="2.800"/><path d="M8 8l5-5" stroke="#1e90ff" stroke-width="1.050"/><path d="M11.400 2.700l2.100-.2-.2 2.100" fill="none" stroke="#1e90ff" stroke-width=".9"/></svg>
<svg style="left:792px;top:245px" width="13.2" height="13.5" viewBox="0.85 0.75 14.30 14.60" preserveAspectRatio="none"><rect x="1.400" y="1.800" width="13.200" height="13" fill="none" stroke="#1e90ff" stroke-width="1"/><rect x="1.400" y="1.300" width="13.200" height="2" fill="#1e90ff" fill-opacity=".7"/><rect x="4" y="5.800" width="1.700" height="8.600" fill="#1e90ff"/><rect x="7.500" y="8.800" width="1.700" height="5.600" fill="#1e90ff"/><rect x="11" y="4.600" width="1.700" height="9.800" fill="#1e90ff"/></svg>
<svg style="left:1293px;top:6.8px" width="15.2" height="12.2" viewBox="0 0 15.2 12.2" preserveAspectRatio="none"><path d="M4 6v3.600c1.200 1.500 7 1.500 8.200 0V6L8 7.600z" fill="#c4e6ff" stroke="#1e78c8" stroke-width="1"/><path d="M.5 3.700L7.600.5l7.100 3.200L7.600 6.900z" fill="#bfe2fd" stroke="#2080d0" stroke-width=".9" stroke-linejoin="round"/><path d="M1.700 4v5.400" stroke="#1e78c8" stroke-width="1.100"/><rect x=".3" y="9.200" width="2.800" height="2.800" fill="#2a84d2"/></svg>
<span style="left:20.80px;top:34px;font-size:16px;line-height:16px;color:#fff;letter-spacing:-0.222px;">PROP FIRM CHALLENGE SIMULATOR - PROFESSIONAL EDITION</span>
<span style="left:20.55px;top:79px;font-size:15.36px;line-height:15.36px;color:#1e90ff;transform:scaleX(0.9505);transform-origin:0 0;text-rendering:geometricPrecision;">CHALLENGE STATISTICS</span>
<span style="left:20.50px;top:104px;font-size:16px;line-height:16px;color:#fff;letter-spacing:-0.250px;">Challenge: FTMO Challenge</span>
<span style="left:21.50px;top:124px;font-size:16px;line-height:16px;color:#fff;letter-spacing:-0.273px;">Attempt: 4/5</span>
<span style="left:47.75px;top:152px;font-size:16px;line-height:16px;color:#000;letter-spacing:-0.195px;">CHALLENGE ACTIVE - FTMO Challenge</span>
<span style="left:39.75px;top:184px;font-size:16px;line-height:16px;color:#fff;letter-spacing:-0.107px;">Balance:</span>
<span style="left:141.50px;top:184px;font-size:16px;line-height:16px;color:#fff;">$10186.29</span>
<span style="left:41.75px;top:204px;font-size:16px;line-height:16px;color:#fff;letter-spacing:-0.208px;">Equity:</span>
<span style="left:141.50px;top:204px;font-size:16px;line-height:16px;color:#fff;">$10309.89</span>
<span style="left:43.00px;top:224px;font-size:16px;line-height:16px;color:#fff;">Closed P&amp;L:</span>
<span style="left:140.50px;top:224px;font-size:16px;line-height:16px;color:#0a8c0a;letter-spacing:-0.062px;">+$186.29 (+1.86%)</span>
<span style="left:41.75px;top:244px;font-size:16px;line-height:16px;color:#fff;letter-spacing:-0.031px;">Open P&amp;L:</span>
<span style="left:140.50px;top:244px;font-size:16px;line-height:16px;color:#0a8c0a;letter-spacing:-0.062px;">+$123.60 (+1.24%)</span>
<span style="left:41.75px;top:264px;font-size:16px;line-height:16px;color:#fff;letter-spacing:-0.125px;">Max DD:</span>
<span style="left:141.50px;top:264px;font-size:16px;line-height:16px;color:#fff;letter-spacing:-0.375px;">0.00%</span>
<span style="left:41.75px;top:284px;font-size:16px;line-height:16px;color:#fff;letter-spacing:0.031px;">Daily DD:</span>
<span style="left:141.50px;top:284px;font-size:16px;line-height:16px;color:#fff;letter-spacing:-0.375px;">0.01%</span>
<span style="left:42.10px;top:344px;font-size:16px;line-height:16px;color:#fff;letter-spacing:-0.179px;">Total Trades: 57 (50C/7O)</span>
<span style="left:43.20px;top:364px;font-size:16px;line-height:16px;color:#fff;letter-spacing:-0.274px;">Win Rate: 38.00% | W:19 L:31</span>
<span style="left:42.20px;top:384px;font-size:16px;line-height:16px;color:#fff;letter-spacing:-0.053px;">SL Violations: 1/3</span>
<span style="left:20.52px;top:414px;font-size:15.36px;line-height:15.36px;color:#1e90ff;transform:scaleX(0.9750);transform-origin:0 0;text-rendering:geometricPrecision;">CONTROL CENTER</span>
<span style="left:70.51px;top:447px;font-size:10.67px;line-height:10.67px;color:#fff;transform:scaleX(0.9909);transform-origin:0 0;">START</span>
<span style="left:200.55px;top:447px;font-size:10.67px;line-height:10.67px;color:#fff;transform:scaleX(0.9500);transform-origin:0 0;">PAUSE</span>
<span style="left:333.56px;top:447px;font-size:10.67px;line-height:10.67px;color:#fff;transform:scaleX(0.9370);transform-origin:0 0;">NEXT</span>
<span style="left:70.88px;top:487px;font-size:10.67px;line-height:10.67px;color:#fff;transform:scaleX(0.9235);transform-origin:0 0;">RESET</span>
<span style="left:196.46px;top:487px;font-size:10.67px;line-height:10.67px;color:#fff;transform:scaleX(0.9429);transform-origin:0 0;">EXPORT</span>
<span style="left:333.60px;top:487px;font-size:10.67px;line-height:10.67px;color:#fff;transform:scaleX(0.9037);transform-origin:0 0;">HELP</span>
<span style="left:20.54px;top:519px;font-size:15.36px;line-height:15.36px;color:#1e90ff;transform:scaleX(0.9646);transform-origin:0 0;text-rendering:geometricPrecision;">QUICK STATS</span>
<span style="left:34.90px;top:539px;font-size:13.33px;line-height:13.33px;color:#fff;letter-spacing:-0.243px;">Largest Trade: $248.10</span>
<span style="left:206.25px;top:539px;font-size:13.33px;line-height:13.33px;color:#fff;letter-spacing:-0.163px;">Total Commission: $59.15</span>
<span style="left:387.00px;top:539px;font-size:13.33px;line-height:13.33px;color:#fff;letter-spacing:-0.337px;">Average Trade: $5.44</span>
<span style="left:546.50px;top:539px;font-size:13.33px;line-height:13.33px;color:#fff;letter-spacing:-0.141px;">Single Trade: 0.0% of target</span>
<span style="left:400.55px;top:79px;font-size:15.36px;line-height:15.36px;color:#1e90ff;transform:scaleX(0.9456);transform-origin:0 0;text-rendering:geometricPrecision;">CHALLENGE RULES</span>
<span style="left:423.00px;top:104px;font-size:16px;line-height:16px;color:#fff;letter-spacing:-0.132px;">Profit Target: $1000</span>
<span style="left:421.75px;top:122px;font-size:16px;line-height:16px;color:#fff;letter-spacing:-0.221px;">Max Daily DD: 5.0%</span>
<span style="left:421.75px;top:140px;font-size:16px;line-height:16px;color:#fff;letter-spacing:-0.264px;">Max Total DD: 10.0%</span>
<span style="left:423.00px;top:158px;font-size:16px;line-height:16px;color:#fff;letter-spacing:-0.219px;">Duration: 30 days</span>
<span style="left:419.75px;top:176px;font-size:16px;line-height:16px;color:#fff;letter-spacing:-0.113px;">Start Balance: $10000</span>
<span style="left:418.50px;top:194px;font-size:16px;line-height:16px;color:#fff;letter-spacing:-0.056px;">Stop Loss: Required</span>
<span style="left:419.75px;top:212px;font-size:16px;line-height:16px;color:#fff;letter-spacing:-0.236px;">Min Trading Days: 4</span>
<span style="left:400.54px;top:257px;font-size:15.36px;line-height:15.36px;color:#1e90ff;transform:scaleX(0.9561);transform-origin:0 0;text-rendering:geometricPrecision;">PERFORMANCE OVERVIEW</span>
<span style="left:423.00px;top:282px;font-size:16px;line-height:16px;color:#fff;letter-spacing:-0.132px;">Challenges Passed: 0</span>
<span style="left:423.00px;top:302px;font-size:16px;line-height:16px;color:#fff;letter-spacing:-0.184px;">Challenges Failed: 0</span>
<span style="left:422.75px;top:322px;font-size:16px;line-height:16px;color:#fff;letter-spacing:-0.250px;">Total Completed: 0</span>
<span style="left:421.75px;top:342px;font-size:16px;line-height:16px;color:#fff;letter-spacing:-0.194px;">Success Rate: 0.00%</span>
<span style="left:400.58px;top:387px;font-size:15.36px;line-height:15.36px;color:#1e90ff;transform:scaleX(0.9247);transform-origin:0 0;text-rendering:geometricPrecision;">CHALLENGE TIMELINE</span>
<span style="left:423.00px;top:412px;font-size:16px;line-height:16px;color:#fff;letter-spacing:-0.114px;">Start: 2025.11.27 17:30</span>
<span style="left:423.00px;top:430px;font-size:16px;line-height:16px;color:#fff;letter-spacing:-0.167px;">Current: 2025.11.28 13:27</span>
<span style="left:423.00px;top:448px;font-size:16px;line-height:16px;color:#fff;letter-spacing:-0.125px;">End: 2025.12.27 17:30</span>
<span style="left:422.75px;top:466px;font-size:16px;line-height:16px;color:#fff;letter-spacing:-0.309px;">Trading Days: 28/4</span>
<span style="left:422.50px;top:484px;font-size:16px;line-height:16px;color:#fff;letter-spacing:-0.074px;">Broker: ICMarketsSC-Demo</span>
<span style="left:805.07px;top:84px;font-size:15.36px;line-height:15.36px;color:#1e90ff;transform:scaleX(0.9273);transform-origin:0 0;text-rendering:geometricPrecision;">TRADE MANAGEMENT</span>
<span style="left:913.25px;top:122px;font-size:10.67px;line-height:10.67px;color:#fff;transform:scaleX(0.9757);transform-origin:0 0;">CLOSE ALL TRADES</span>
<span style="left:810.00px;top:162px;font-size:10.67px;line-height:10.67px;color:#fff;transform:scaleX(0.9596);transform-origin:0 0;">CLOSE PROFITABLE ONLY</span>
<span style="left:997.00px;top:162px;font-size:10.67px;line-height:10.67px;color:#fff;transform:scaleX(0.9705);transform-origin:0 0;">CLOSE LOSING ONLY</span>
<span style="left:816.50px;top:202px;font-size:10.67px;line-height:10.67px;color:#fff;transform:scaleX(0.9365);transform-origin:0 0;">CLOSE BUY POSITIONS</span>
<span style="left:988.00px;top:202px;font-size:10.67px;line-height:10.67px;color:#fff;transform:scaleX(0.9286);transform-origin:0 0;">CLOSE SELL POSITIONS</span>
<span style="left:810.03px;top:244px;font-size:15.36px;line-height:15.36px;color:#1e90ff;transform:scaleX(0.9722);transform-origin:0 0;text-rendering:geometricPrecision;">OPEN TRADES</span>
<span style="left:792.80px;top:272px;font-size:10.67px;line-height:10.67px;color:#fff;">Symbol</span>
<span style="left:853.80px;top:272px;font-size:10.67px;line-height:10.67px;color:#fff;">Type</span>
<span style="left:888.80px;top:272px;font-size:10.67px;line-height:10.67px;color:#fff;">Volume</span>
<span style="left:932.80px;top:272px;font-size:10.67px;line-height:10.67px;color:#fff;">Price</span>
<span style="left:992.80px;top:272px;font-size:10.67px;line-height:10.67px;color:#fff;">SL</span>
<span style="left:1028.80px;top:272px;font-size:10.67px;line-height:10.67px;color:#fff;">TP</span>
<span style="left:1062.80px;top:272px;font-size:10.67px;line-height:10.67px;color:#fff;">Magic</span>
<span style="left:1112.80px;top:272px;font-size:10.67px;line-height:10.67px;color:#fff;">P&amp;L</span>
<span style="left:793.40px;top:290px;font-size:10.67px;line-height:10.67px;color:#fff;letter-spacing:-0.330px;">XAUUSD</span>
<span style="left:852.40px;top:290px;font-size:10.67px;line-height:10.67px;color:#fff;letter-spacing:-0.120px;">BUY</span>
<span style="left:888.40px;top:290px;font-size:10.67px;line-height:10.67px;color:#fff;">0.05</span>
<span style="left:933.40px;top:290px;font-size:10.67px;line-height:10.67px;color:#fff;">4177.41</span>
<span style="left:993.40px;top:290px;font-size:10.67px;line-height:10.67px;color:#fff;">Yes</span>
<span style="left:1028.40px;top:290px;font-size:10.67px;line-height:10.67px;color:#fff;">Yes</span>
<span style="left:1063.40px;top:290px;font-size:10.67px;line-height:10.67px;color:#fff;">0</span>
<span style="left:1113.40px;top:290px;font-size:10.67px;line-height:10.67px;color:#0a780a;">$30.45</span>
<span style="left:793.40px;top:306px;font-size:10.67px;line-height:10.67px;color:#fff;letter-spacing:-0.330px;">GBPUSD</span>
<span style="left:852.40px;top:306px;font-size:10.67px;line-height:10.67px;color:#fff;letter-spacing:-0.120px;">SELL</span>
<span style="left:888.40px;top:306px;font-size:10.67px;line-height:10.67px;color:#fff;">0.20</span>
<span style="left:932.40px;top:306px;font-size:10.67px;line-height:10.67px;color:#fff;">1.32084</span>
<span style="left:993.40px;top:306px;font-size:10.67px;line-height:10.67px;color:#fff;">Yes</span>
<span style="left:1027.40px;top:306px;font-size:10.67px;line-height:10.67px;color:#fff;">No</span>
<span style="left:1063.40px;top:306px;font-size:10.67px;line-height:10.67px;color:#fff;">0</span>
<span style="left:1113.40px;top:306px;font-size:10.67px;line-height:10.67px;color:#f01010;">$-2.20</span>
<span style="left:792.40px;top:322px;font-size:10.67px;line-height:10.67px;color:#fff;letter-spacing:-0.330px;">BTCUSD</span>
<span style="left:852.40px;top:322px;font-size:10.67px;line-height:10.67px;color:#fff;letter-spacing:-0.120px;">SELL</span>
<span style="left:888.40px;top:322px;font-size:10.67px;line-height:10.67px;color:#fff;">0.30</span>
<span style="left:933.40px;top:322px;font-size:10.67px;line-height:10.67px;color:#fff;">91272.00</span>
<span style="left:993.40px;top:322px;font-size:10.67px;line-height:10.67px;color:#fff;">Yes</span>
<span style="left:1027.40px;top:322px;font-size:10.67px;line-height:10.67px;color:#fff;">No</span>
<span style="left:1063.40px;top:322px;font-size:10.67px;line-height:10.67px;color:#fff;">0</span>
<span style="left:1113.40px;top:322px;font-size:10.67px;line-height:10.67px;color:#0a780a;">$103.95</span>
<span style="left:792.40px;top:338px;font-size:10.67px;line-height:10.67px;color:#fff;letter-spacing:-0.330px;">USDCHF</span>
<span style="left:852.40px;top:338px;font-size:10.67px;line-height:10.67px;color:#fff;letter-spacing:-0.120px;">SELL</span>
<span style="left:888.40px;top:338px;font-size:10.67px;line-height:10.67px;color:#fff;">0.10</span>
<span style="left:933.40px;top:338px;font-size:10.67px;line-height:10.67px;color:#fff;">0.80696</span>
<span style="left:993.40px;top:338px;font-size:10.67px;line-height:10.67px;color:#fff;">Yes</span>
<span style="left:1027.40px;top:338px;font-size:10.67px;line-height:10.67px;color:#fff;">No</span>
<span style="left:1063.40px;top:338px;font-size:10.67px;line-height:10.67px;color:#fff;">886299</span>
<span style="left:1113.40px;top:338px;font-size:10.67px;line-height:10.67px;color:#f01010;">$-0.37</span>
<span style="left:792.40px;top:354px;font-size:10.67px;line-height:10.67px;color:#fff;letter-spacing:-0.330px;">EURUSD</span>
<span style="left:852.40px;top:354px;font-size:10.67px;line-height:10.67px;color:#fff;letter-spacing:-0.120px;">SELL</span>
<span style="left:888.40px;top:354px;font-size:10.67px;line-height:10.67px;color:#fff;">0.03</span>
<span style="left:932.40px;top:354px;font-size:10.67px;line-height:10.67px;color:#fff;">1.15588</span>
<span style="left:993.40px;top:354px;font-size:10.67px;line-height:10.67px;color:#fff;">Yes</span>
<span style="left:1028.40px;top:354px;font-size:10.67px;line-height:10.67px;color:#fff;">Yes</span>
<span style="left:1063.40px;top:354px;font-size:10.67px;line-height:10.67px;color:#fff;">0</span>
<span style="left:1113.40px;top:354px;font-size:10.67px;line-height:10.67px;color:#f01010;">$-0.51</span>
<span style="left:792.40px;top:370px;font-size:10.67px;line-height:10.67px;color:#fff;letter-spacing:-0.330px;">NZDJPY</span>
<span style="left:852.40px;top:370px;font-size:10.67px;line-height:10.67px;color:#fff;letter-spacing:-0.120px;">SELL</span>
<span style="left:888.40px;top:370px;font-size:10.67px;line-height:10.67px;color:#fff;">0.10</span>
<span style="left:933.40px;top:370px;font-size:10.67px;line-height:10.67px;color:#fff;">89.154</span>
<span style="left:993.40px;top:370px;font-size:10.67px;line-height:10.67px;color:#fff;">Yes</span>
<span style="left:1027.40px;top:370px;font-size:10.67px;line-height:10.67px;color:#fff;">No</span>
<span style="left:1063.40px;top:370px;font-size:10.67px;line-height:10.67px;color:#fff;">886299</span>
<span style="left:1113.40px;top:370px;font-size:10.67px;line-height:10.67px;color:#f01010;">$-1.28</span>
<span style="left:793.40px;top:386px;font-size:10.67px;line-height:10.67px;color:#fff;letter-spacing:-0.330px;">AUDUSD</span>
<span style="left:852.40px;top:386px;font-size:10.67px;line-height:10.67px;color:#fff;letter-spacing:-0.120px;">BUY</span>
<span style="left:888.40px;top:386px;font-size:10.67px;line-height:10.67px;color:#fff;">0.10</span>
<span style="left:933.40px;top:386px;font-size:10.67px;line-height:10.67px;color:#fff;">0.65227</span>
<span style="left:993.40px;top:386px;font-size:10.67px;line-height:10.67px;color:#fff;">Yes</span>
<span style="left:1027.40px;top:386px;font-size:10.67px;line-height:10.67px;color:#fff;">No</span>
<span style="left:1063.40px;top:386px;font-size:10.67px;line-height:10.67px;color:#fff;">886299</span>
<span style="left:1113.40px;top:386px;font-size:10.67px;line-height:10.67px;color:#f01010;">$-1.90</span>
<span style="left:1205.00px;top:8px;font-size:9.5px;line-height:9.5px;color:#fff;letter-spacing:-0.028px;">Prop Firm Simulator</span>
</div>
</body></html>
